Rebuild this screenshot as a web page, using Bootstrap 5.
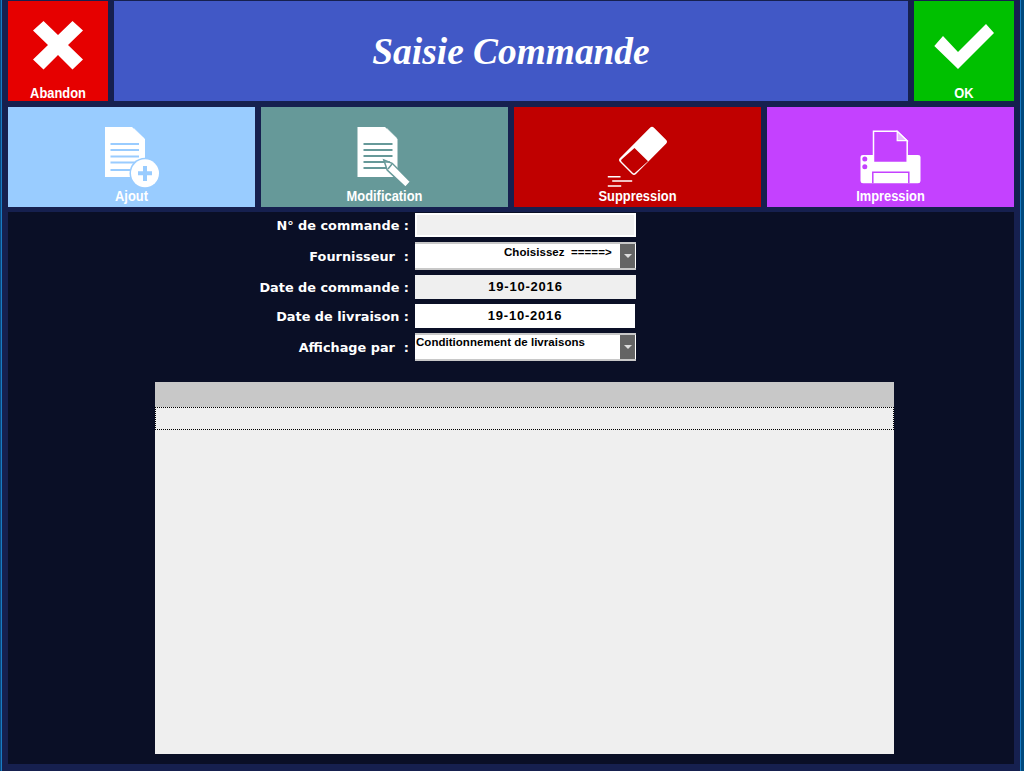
<!DOCTYPE html>
<html lang="fr">
<head>
<meta charset="utf-8">
<title>Saisie Commande</title>
<link href="https://cdn.jsdelivr.net/npm/bootstrap@5.3.0/dist/css/bootstrap.min.css" rel="stylesheet">
<style>
html,body{height:771px;overflow:hidden}
body{background:linear-gradient(90deg,#0c4a80 0 1px,#1a7cc4 1px 2px,#16204f 2px 1020px,#1a7cc4 1020px 1021px,#00497c 1021px);padding:1px 10px 0 8px;width:1024px}
.tile{height:100px;color:#fff;font-family:"Liberation Sans",sans-serif;font-weight:700;font-size:14px;line-height:16px;position:relative;border:0;padding:0;display:flex;flex-direction:column;align-items:center}
.tile span{position:absolute;left:0;right:0;text-align:center;transform:scaleX(.92)}
.tile svg{overflow:visible;flex:none}
.tile-s{width:100px;flex:none}
.tile-s svg{margin-top:20px}
.tile-s span{top:84px}
.tile-w{flex:1 1 0}
.tile-w span{top:81px}
.tile-w svg{margin-top:18px}
.c-red{background:#e60000}
.c-green{background:#00c000}
.c-sky{background:#99ccff}
.c-teal{background:#669999}
.c-dark{background:#c00000}
.c-violet{background:#c441ff}
.head{flex:1 1 0;height:100px;background:#4158c6;color:#fff;font:italic 700 37.4px/102px "Liberation Serif",serif;text-align:center;margin:0}
.rowgap{gap:6px}
.rowtwo{margin-top:6px}
.panel{background:#0a0f26;height:552px;margin-top:5px;padding-top:1px;display:flex;flex-direction:column;align-items:center}
.frm{width:1006px}
.line{display:flex;gap:6px;margin-bottom:5px;align-items:stretch}
.lab{width:401px;color:#fff;font:700 12.85px "DejaVu Sans",sans-serif;display:flex;align-items:center;justify-content:flex-end;white-space:pre;margin:0}
.fld{width:221px;height:24px;background:#fff;color:#000;border:0;text-align:center;font:700 13px/24px "Liberation Sans",sans-serif;letter-spacing:.78px}
.fld-ro{background:#f0f0f0;border:2px solid #fff}
.fld-gray{background:#efefef}
.fld-white{width:220px}
.cmb{width:221px;height:28px;background:#fff;border-top:2px solid #c8c8c8;border-bottom:2px solid #c8c8c8;display:flex;color:#000;font:700 11.5px/14px "Liberation Sans",sans-serif}
.cmb b{flex:1;font-weight:700;white-space:pre;padding:0 0 0 1px;letter-spacing:.03px}
.cmb .pick-a{padding:1px 0 0 89px;letter-spacing:.05px}
.arrow{width:15px;margin-right:1px;background:#646464;display:flex;align-items:center;justify-content:center}
.arrow i{display:block;width:0;height:0;border-left:4px solid transparent;border-right:4px solid transparent;border-top:4px solid #ddd}
.grille{width:739px;height:372px;margin:16px 0 0 26px;background:#efefef;flex:none}
.grille-h{height:25px;background:#c8c8c8}
.grille-r{height:23px;border:1px dotted #000}
</style>
</head>
<body>
<div class="d-flex rowgap">
  <button class="tile tile-s c-red" type="button">
    <svg width="50" height="50" viewBox="0 0 50 50"><path d="M10.500 0 25 14 39.500 0 50 9.500 35 24 50 38.500 39.500 48.500 25 34 10.500 48.500 0 38.500 15 24 0 9.500Z" fill="#fff"/></svg>
    <span>Abandon</span>
  </button>
  <h1 class="head">Saisie Commande</h1>
  <button class="tile tile-s c-green" type="button">
    <svg width="62" height="50" viewBox="0 0 62 50"><path d="M1.300 25 10 15 25 31 53 3 61 12 25 48Z" fill="#fff"/></svg>
    <span>OK</span>
  </button>
</div>
<div class="d-flex rowgap rowtwo">
  <button class="tile tile-w c-sky" type="button">
    <svg width="62" height="62" viewBox="0 0 62 62">
      <path d="M4 2H31L44 14V52H4Z" fill="#fff"/>
      <path d="M33 3 43 13H33Z" fill="#fff" opacity=".55"/>
      <path d="M9.5 19H38M9.5 25H38M9.5 31.500H38M9.500 37.500H38M9.500 45H30" stroke="#99ccff" stroke-width="2" fill="none"/>
      <circle cx="44" cy="48.300" r="15.500" fill="#99ccff"/>
      <circle cx="44" cy="48.300" r="14" fill="#fff"/>
      <path d="M44 41V56M37 48.300H51" stroke="#99ccff" stroke-width="4" fill="none"/>
    </svg>
    <span>Ajout</span>
  </button>
  <button class="tile tile-w c-teal" type="button">
    <svg width="62" height="62" viewBox="0 0 62 62">
      <path d="M3.500 2H31L43.500 14V52H3.500Z" fill="#fff"/>
      <path d="M33 3 43 13H33Z" fill="#fff" opacity=".6"/>
      <path d="M9.500 19H38.500M9.500 25H38.500M9.500 31H38.500M9.500 37H30M9.500 43H32" stroke="#669999" stroke-width="1.800" fill="none"/>
      <path d="M29.800 35 38.200 38.300 56.500 56.700 51.500 62.300 33.200 45Z" fill="#fff" stroke="#669999" stroke-width="1.500"/>
      <path d="M31 37 36 37M34 44 38 39" stroke="#669999" stroke-width="1.500" fill="none"/>
    </svg>
    <span>Modification</span>
  </button>
  <button class="tile tile-w c-dark" type="button">
    <svg width="62" height="62" viewBox="0 0 62 62">
      <path d="M43 2.700Q45 1 47 2.700L59 14.700Q61 16.700 59 18.700L29 49Q27 51 25 49L13 37Q11 35 13 33Z" fill="#fff"/>
      <path d="M27.500 23 41 36.300 27.800 48Q27 48.800 26 48L14.500 36.500Q13.600 35.500 14.500 34.500Z" fill="#c00000"/>
      <path d="M.8 51.700H13.500M5.200 56H25.200M.8 61H14.200" stroke="#fff" stroke-width="1.500" fill="none"/>
    </svg>
    <span>Suppression</span>
  </button>
  <button class="tile tile-w c-violet" type="button">
    <svg width="62" height="62" viewBox="0 0 62 62">
      <path d="M3 30H58Q60.500 30 60.500 32V56Q60.500 58.300 58 58.300H3Q.5 58.300 .5 56V32Q.5 30 3 30Z" fill="#fff"/>
      <path d="M13.500 6.300H37.200L47.200 16V37.500H13.500Z" fill="#c441ff" stroke="#fff" stroke-width="1.500"/>
      <path d="M37.200 6.300V15.700H47.200Z" fill="#e8b8ff" stroke="#fff" stroke-width="1.200"/>
      <path d="M12.800 58.300V47.300H48.800V58.300" fill="none" stroke="#c441ff" stroke-width="1.500"/>
      <circle cx="4.800" cy="34" r="2.500" fill="#c441ff"/>
      <circle cx="4.800" cy="41.700" r="2.500" fill="#c441ff"/>
    </svg>
    <span>Impression</span>
  </button>
</div>
<main class="panel">
  <form class="frm">
    <div class="line"><label class="lab">N° de commande :</label><input class="fld fld-ro" readonly aria-label="N° de commande"></div>
    <div class="line"><label class="lab">Fournisseur  :</label><div class="cmb"><b class="pick-a">Choisissez  =====&gt;</b><div class="arrow"><i></i></div></div></div>
    <div class="line"><label class="lab">Date de commande :</label><div class="fld fld-gray">19-10-2016</div></div>
    <div class="line"><label class="lab">Date de livraison :</label><div class="fld fld-white">19-10-2016</div></div>
    <div class="line"><label class="lab">Affichage par  :</label><div class="cmb"><b>Conditionnement de livraisons</b><div class="arrow"><i></i></div></div></div>
  </form>
  <section class="grille"><div class="grille-h"></div><div class="grille-r"></div></section>
</main>
</body>
</html>
